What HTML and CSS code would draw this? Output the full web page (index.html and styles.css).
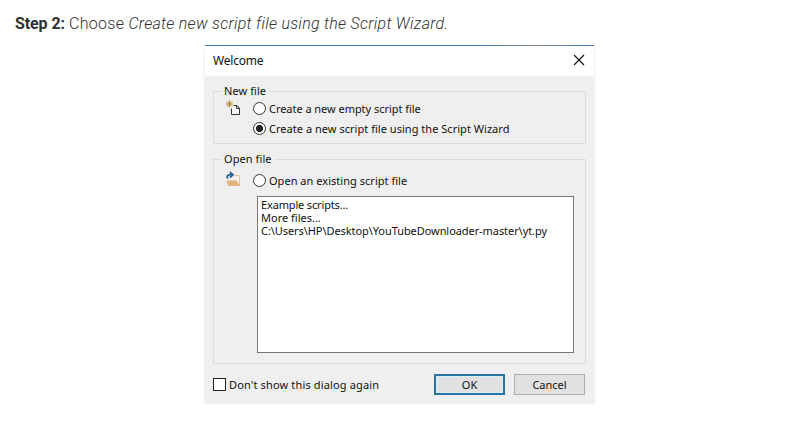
FILE: index.html
```html
<!DOCTYPE html>
<html lang="en">
<head>
<meta charset="utf-8">
<title>Welcome</title>
<link rel="stylesheet" href="styles.css">
</head>
<body>
<p class="step"><strong>Step 2:</strong> Choose <em>Create new script file using the Script Wizard.</em></p>
<section class="dialog">
  <header class="titlebar">
    <span class="title">Welcome</span>
    <svg class="close" width="12" height="12" viewBox="0 0 12 12"><path d="M1 1l10 10M11 1L1 11"/></svg>
  </header>
  <div class="content">
    <fieldset class="group new-file">
      <legend>New file</legend>
      <svg class="icon" width="16" height="16" viewBox="0 0 16 16">
        <path class="halo" d="M3.500 0v8M0 4h8M1 1l6 6M7 1L1 7"/>
        <path class="spark" d="M3.500 .5v7M0 4h7M1 1.500l5 5M6 1.500l-5 5"/>
        <path class="paper" d="M7.500 5.500h3.500l2.500 3v6h-8v-6M10.500 5.500v3h3"/>
      </svg>
      <div class="options">
        <label class="option"><span class="radio"></span><span class="t-empty">Create a new empty script file</span></label>
        <label class="option"><span class="radio checked"></span><span class="t-wizard">Create a new script file using the Script Wizard</span></label>
      </div>
    </fieldset>
    <fieldset class="group open-file">
      <legend>Open file</legend>
      <svg class="icon" width="16" height="16" viewBox="0 0 16 16">
        <path class="folder-back" d="M8 4.500h5.500v10"/>
        <path class="folder" d="M.5 9.500h10l3.500 5.500H2z"/>
        <path class="arrow" d="M1.800 7.500C0 4.500 3 3 6 3.800M4 1l3 2.800L4 6.500"/>
      </svg>
      <div class="options">
        <label class="option"><span class="radio"></span><span class="t-open">Open an existing script file</span></label>
        <ul class="files">
          <li class="t-example">Example scripts...</li>
          <li>More files...</li>
          <li class="t-path">C:\Users\HP\Desktop\YouTubeDownloader-master\yt.py</li>
        </ul>
      </div>
    </fieldset>
    <footer class="footer">
      <label class="again"><span class="checkbox"></span><span>Don't show this dialog again</span></label>
      <button class="button primary">OK</button>
      <button class="button">Cancel</button>
    </footer>
  </div>
</section>
</body>
</html>
```
FILE: styles.css
```css
* { box-sizing: border-box; }
body { margin: 0; background: #fff; overflow: hidden; }
.step { margin: 0; padding: 13px 0 0 15px; height: 45px; font: 300 16px/22px Roboto, sans-serif; color: #303030; white-space: nowrap; letter-spacing: 0.28px; }
.step strong { font-weight: 700; color: #303030; letter-spacing: -0.1px; }
.dialog { width: 389px; margin-left: 205px; font: 11px/13px "Noto Sans", sans-serif; color: #111; background: #efefef; white-space: nowrap; box-shadow: 0 2px 0 #fff, 0 3px 3px rgba(0,0,0,.12); }
.titlebar { display: flex; justify-content: space-between; align-items: center; height: 31px; padding: 0 9px 1px 8px; background: linear-gradient(90deg, #3f78a8 0 70%, #7f8b96 85%, #3f78a8) top / 100% 1px no-repeat #fff; }
.title { font-size: 12px; letter-spacing: -0.2px; padding-top: 1px; }
.close { fill: none; stroke: #111; stroke-width: 1.2; }
.content { padding: 8px 8px 9px; }
.group { display: flex; min-width: 0; width: 373px; margin: 0; padding: 0 11px 0 12px; border: 1px solid #dcdcdc; }
.new-file { height: 60px; }
.open-file { height: 212px; margin-top: 8px; }
legend { height: 15px; line-height: 13px; padding: 0 3px 0 2px; margin-left: -4px; letter-spacing: 0.08px; }
.icon { flex: none; margin-top: 1px; width: 16px; height: 16px; fill: none; }
.options { margin-left: 11px; }
.option { display: flex; align-items: center; height: 20px; gap: 3px; }
.option span:last-child { padding-bottom: 2px; }
.t-empty { letter-spacing: -0.04px; }
.t-wizard, .t-open { letter-spacing: 0.03px; }
.open-file .icon { margin-top: 4px; }
.open-file .options { padding-top: 4px; }
.radio { width: 13px; height: 13px; border: 1px solid #333; border-radius: 50%; background: #fff; }
.new-file .radio, .open-file .radio { position: relative; top: -0.5px; }
.checked { background: radial-gradient(circle, #222 3.200px, #fff 3.900px); }
.halo { stroke: #f6e6c4; stroke-width: 1.500; }
.spark { stroke: #a68238; stroke-width: .9; }
.paper { stroke: #333; fill: #fafafa; }
.folder-back { stroke: #e8c69c; fill: #f5f0e8; }
.folder { fill: #e2b57f; }
.arrow { stroke: #255f8c; stroke-width: 1.700; }
.files { list-style: none; width: 317px; height: 157px; margin: 5px 0 0 4px; padding: 1px 3px; border: 1px solid #777; background: #fff; }
.t-example { letter-spacing: -0.15px; }
.t-path { letter-spacing: -0.07px; }
.footer { display: flex; height: 31px; padding-top: 10px; gap: 9px; }
.again { display: flex; align-items: center; gap: 3px; width: 212px; letter-spacing: 0.15px; }
.checkbox { width: 13px; height: 13px; border: 1px solid #222; background: #fff; }
.button { width: 71px; height: 21px; margin: 0; padding: 0; flex: none; border: 1px solid #adadad; background: #e1e1e1; font: inherit; color: inherit; }
.primary { border: 2px solid #2c719f; box-shadow: inset 0 0 0 1px #d5effb; }
```
